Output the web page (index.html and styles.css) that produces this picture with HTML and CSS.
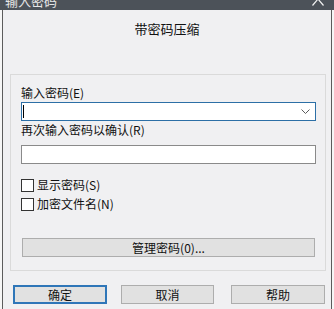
FILE: index.html
```
<!DOCTYPE html>
<html lang="zh-CN">
<head>
    <meta charset="UTF-8">
    <meta name="viewport" content="width=device-width, initial-scale=1.0">
    <title>输入密码</title>
    <link rel="stylesheet" href="styles.css">
</head>
<body>
    <div class="titlebar">
        <span class="title">输入密码</span>
        <svg class="close" width="12" height="10" viewBox="0 0 12 10">
            <path d="M6 -1 L0.5 5.5 M6 -1 L11.5 5.5" stroke="#f2f2f2" stroke-width="1.2" fill="none"/>
        </svg>
    </div>
    <div class="window">
        <div class="heading">带密码压缩</div>
        <div class="group">
            <div class="label first">输入密码(E)</div>
            <div class="combo">
                <span class="caret"></span>
                <svg class="chevron" width="9" height="6" viewBox="0 0 9 6">
                    <path d="M0.5 0.5 L4.5 4.5 L8.5 0.5" stroke="#5a5a5a" stroke-width="1" fill="none"/>
                </svg>
            </div>
            <div class="label second">再次输入密码以确认(R)</div>
            <div class="textbox"></div>
            <div class="check check-first"><span class="box"></span>显示密码(S)</div>
            <div class="check"><span class="box"></span>加密文件名(N)</div>
            <button class="manage">管理密码(0)...</button>
        </div>
        <div class="buttons">
            <button class="btn default">确定</button>
            <button class="btn cancel">取消</button>
            <button class="btn help">帮助</button>
        </div>
    </div>
</body>
</html>
```

FILE: styles.css
```
*{
    margin: 0px;
    box-sizing: border-box;
}
body{
    width: 334px;
    height: 309px;
    overflow: hidden;
    background-color: #f6f6f6;
    font-family: "Noto Sans CJK SC", "Noto Sans", sans-serif;
    font-size: 12px;
    color: #111;
}
.titlebar{
    height: 10px;
    background-color: #4c5259;
    display: flex;
    overflow: hidden;
}
.title{
    display: block;
    margin-top: -6px;
    margin-left: 5px;
    font-size: 13px;
    line-height: 14px;
    color: #e6e6e6;
}
.close{
    margin-left: auto;
    margin-right: 10px;
}
.window{
    margin-left: 2px;
    width: 330px;
    height: 299px;
    background-color: #f0f0f2;
    border-left: 1px solid #5c5c5c;
    border-right: 1px solid #5c5c5c;
}
.heading{
    height: 64px;
    padding-top: 11px;
    line-height: 16px;
    font-size: 13px;
    text-align: center;
}
.group{
    margin-left: 7px;
    width: 316px;
    height: 197px;
    border: 1px solid #dadada;
    padding: 11px 9px 0px 10px;
}
.label{
    line-height: 14px;
    font-size: 12px;
}
.second{
    margin-top: 2px;
}
.combo{
    margin-top: 2px;
    height: 19px;
    background-color: #fff;
    border: 1px solid #2c6fa6;
    display: flex;
    align-items: center;
}
.caret{
    width: 1px;
    height: 13px;
    margin-left: 1px;
    background-color: #000;
}
.chevron{
    margin-left: auto;
    margin-right: 5px;
}
.textbox{
    margin-top: 8px;
    height: 19px;
    background-color: #fff;
    border: 1px solid #8a8a8a;
}
.check{
    display: flex;
    align-items: center;
    height: 14px;
    line-height: 14px;
    margin-top: 5px;
}
.check-first{
    margin-top: 14px;
}
.box{
    width: 13px;
    height: 13px;
    border: 1px solid #333;
    background-color: #fff;
    margin-right: 3px;
}
.manage{
    display: block;
    margin-top: 27px;
    margin-left: 1px;
    width: 293px;
    height: 19px;
    padding: 0px;
    background-color: #e1e1e1;
    border: 1px solid #adadad;
    font-family: "Noto Sans CJK SC", "Noto Sans", sans-serif;
    font-size: 12px;
    line-height: 16px;
    color: #111;
}
.buttons{
    display: flex;
    margin-top: 14px;
    padding-left: 10px;
}
.btn{
    height: 19px;
    padding: 0px;
    background-color: #e1e1e1;
    border: 1px solid #adadad;
    font-family: "Noto Sans CJK SC", "Noto Sans", sans-serif;
    font-size: 12px;
    line-height: 16px;
    color: #111;
}
.default{
    width: 94px;
    border: 2px solid #2f76b8;
}
.cancel{
    width: 93px;
    margin-left: 14px;
}
.help{
    width: 94px;
    margin-left: 17px;
}
```
